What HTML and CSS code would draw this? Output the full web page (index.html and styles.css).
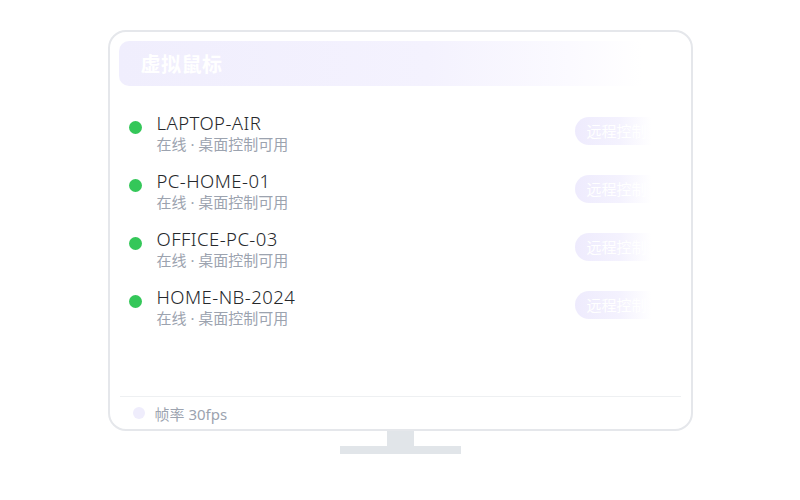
FILE: index.html
```html
<!DOCTYPE html>
<html lang="zh-CN">
<head>
<meta charset="utf-8">
<title>虚拟鼠标</title>
<link rel="stylesheet" href="styles.css">
</head>
<body>
<div class="stage">
  <div class="monitor">
    <div class="screen">
      <div class="header"><span class="title">虚拟鼠标</span></div>
      <div class="list">
        <div class="row">
          <span class="dot"></span>
          <div class="info"><div class="name">LAPTOP-AIR</div><div class="sub">在线 · 桌面控制可用</div></div>
          <span class="btn">远程控制</span>
        </div>
        <div class="row">
          <span class="dot"></span>
          <div class="info"><div class="name">PC-HOME-01</div><div class="sub">在线 · 桌面控制可用</div></div>
          <span class="btn">远程控制</span>
        </div>
        <div class="row">
          <span class="dot"></span>
          <div class="info"><div class="name">OFFICE-PC-03</div><div class="sub">在线 · 桌面控制可用</div></div>
          <span class="btn">远程控制</span>
        </div>
        <div class="row">
          <span class="dot"></span>
          <div class="info"><div class="name">HOME-NB-2024</div><div class="sub">在线 · 桌面控制可用</div></div>
          <span class="btn">远程控制</span>
        </div>
      </div>
      <div class="footer"><span class="fdot"></span><span class="ftext">帧率 30fps</span></div>
    </div>
    <div class="neck"></div>
    <div class="base"></div>
  </div>
</div>
</body>
</html>
```
FILE: styles.css
```css
html, body {
  margin: 0;
  padding: 0;
  background: #ffffff;
}
body {
  font-family: "Noto Sans", "Noto Sans CJK SC", sans-serif;
}
.stage {
  width: 800px;
  height: 500px;
  display: flex;
  justify-content: center;
  padding-top: 30px;
  box-sizing: border-box;
}
.monitor {
  display: flex;
  flex-direction: column;
  align-items: center;
}
.screen {
  width: 585px;
  height: 401px;
  box-sizing: border-box;
  border: 2px solid #e5e7eb;
  border-radius: 18px;
  padding: 9px 9px 0 9px;
  display: flex;
  flex-direction: column;
  background: #fff;
}
.header {
  height: 45px;
  border-radius: 10px;
  background: linear-gradient(90deg, #f0eefd 0%, #f4f2fe 55%, #fbfaff 80%, #ffffff 93%);
  display: flex;
  align-items: center;
  padding-left: 22px;
  flex-shrink: 0;
}
.title {
  color: #ffffff;
  font-family: "Noto Sans CJK SC", sans-serif;
  font-weight: 700;
  font-size: 20px;
  letter-spacing: 0.5px;
}
.list {
  flex: 1;
  padding: 25px 0 0 10px;
}
.row {
  height: 58px;
  display: flex;
  align-items: flex-start;
}
.dot {
  width: 13px;
  height: 13px;
  border-radius: 50%;
  background: #34c759;
  margin-top: 10px;
  flex-shrink: 0;
}
.info {
  margin-left: 15px;
}
.name {
  font-size: 18.5px;
  font-weight: 300;
  line-height: 23px;
  color: #25272b;
  letter-spacing: 0.45px;
}
.sub {
  font-size: 15px;
  line-height: 20px;
  color: #9ca3af;
}
.btn {
  margin-left: auto;
  margin-right: 17px;
  margin-top: 6px;
  width: 90px;
  height: 28px;
  box-sizing: border-box;
  border-radius: 14px;
  padding-left: 12px;
  background: linear-gradient(90deg, #eeebfd 0%, #f4f2fe 50%, #ffffff 85%);
  color: #ffffff;
  font-size: 15px;
  line-height: 28px;
  white-space: nowrap;
  overflow: hidden;
}
.footer {
  height: 33px;
  box-sizing: border-box;
  border-top: 1px solid #eef0f2;
  margin: 0 1px;
  display: flex;
  align-items: center;
  padding-left: 13px;
  flex-shrink: 0;
}
.fdot {
  width: 12px;
  height: 12px;
  border-radius: 50%;
  background: #efedfc;
}
.ftext {
  margin-left: 10px;
  font-size: 15px;
  color: #9ca3af;
}
.neck {
  width: 27px;
  height: 15px;
  background: #e1e5e9;
}
.base {
  width: 121px;
  height: 8px;
  background: #e1e5e9;
}
```
